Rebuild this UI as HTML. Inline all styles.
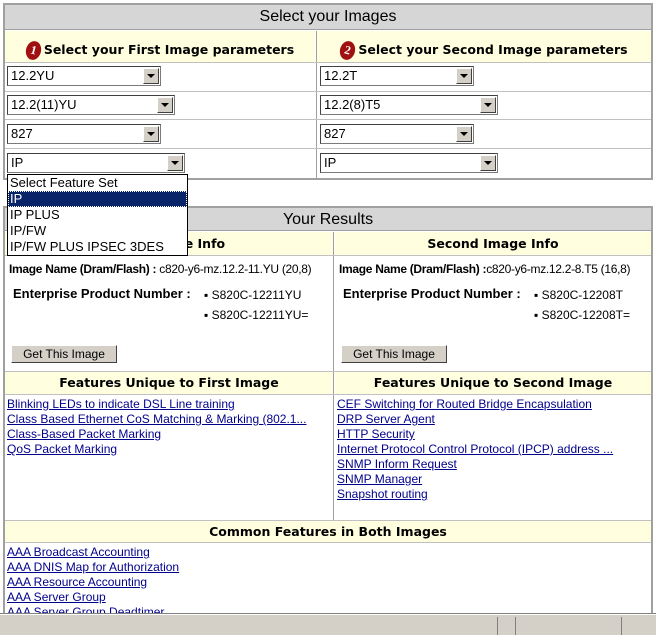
<!DOCTYPE html>
<html><head><meta charset="utf-8"><style>
*{margin:0;padding:0;box-sizing:border-box}
body{width:656px;height:635px;background:#fff;position:relative;overflow:hidden;font-family:"Liberation Sans",Arial,sans-serif;font-size:12px;color:#000}
.a{position:absolute}
.hd{background:#d6d6d6;text-align:center;font-size:16px;border-bottom:1px solid #a0a0a0}
.yl{background:#ffffe0;text-align:center;font-family:"DejaVu Sans",sans-serif;font-weight:bold;font-size:12.5px}
.box{border:2px solid #a0a0a0}
.vl{position:absolute;width:1px;background:#a0a0a0}
.hl{position:absolute;height:1px;background:#c0c0c0}
.sel{position:absolute;height:20px;border:1px solid #7a7a7a;border-top-color:#404040;border-left-color:#404040;background:#fff;font-size:13px;padding:1px 3px;line-height:16px}
.sel b{position:absolute;right:1px;top:1px;width:16px;height:16px;background:#d4d0c8;border:1px solid;border-color:#fff #404040 #404040 #fff}
.sel b:after{content:"";position:absolute;left:3px;top:5px;border:4px solid transparent;border-top:4px solid #000;border-bottom:0}
a{color:#00008b;text-decoration:underline;display:block;line-height:15px;font-size:12px}
.btn{position:absolute;height:18px;background:#d4d0c8;border:1px solid;border-color:#fff #404040 #404040 #fff;font-size:12px;line-height:16px;text-align:center}
.ic{display:inline-block;width:15px;height:19px;border-radius:50%;background:#a01010;color:#fff;font-size:12px;line-height:19px;text-align:center;vertical-align:0px;margin-right:3px;font-family:"Liberation Serif",serif;transform:rotate(15deg)}
</style></head><body>
<div class="a box" style="left:3px;top:3px;width:650px;height:177px"></div>
<div class="a hd" style="left:5px;top:5px;width:646px;height:25px;line-height:24px">Select your Images</div>
<div class="a yl" style="left:5px;top:31px;width:310px;height:31px;line-height:38px"><span class="ic">1</span>Select your First Image parameters</div>
<div class="a yl" style="left:317px;top:31px;width:334px;height:31px;line-height:38px"><span class="ic">2</span>Select your Second Image parameters</div>
<div class="vl" style="left:316px;top:31px;height:147px"></div>
<div class="hl" style="left:5px;top:62px;width:646px"></div>
<div class="hl" style="left:5px;top:91px;width:646px"></div>
<div class="hl" style="left:5px;top:119px;width:646px"></div>
<div class="hl" style="left:5px;top:148px;width:646px"></div>
<div class="sel" style="left:7px;top:66px;width:154px">12.2YU<b></b></div>
<div class="sel" style="left:7px;top:95px;width:168px">12.2(11)YU<b></b></div>
<div class="sel" style="left:7px;top:124px;width:154px">827<b></b></div>
<div class="sel" style="left:7px;top:153px;width:178px">IP<b></b></div>
<div class="sel" style="left:320px;top:66px;width:154px">12.2T<b></b></div>
<div class="sel" style="left:320px;top:95px;width:178px">12.2(8)T5<b></b></div>
<div class="sel" style="left:320px;top:124px;width:154px">827<b></b></div>
<div class="sel" style="left:320px;top:153px;width:178px">IP<b></b></div>

<div class="a box" style="left:3px;top:206px;width:650px;height:420px"></div>
<div class="a hd" style="left:5px;top:208px;width:646px;height:23px;line-height:24px">Your Results</div>
<div class="a yl" style="left:5px;top:232px;width:328px;height:23px;line-height:24px">First Image Info</div>
<div class="a yl" style="left:335px;top:232px;width:316px;height:23px;line-height:24px">Second Image Info</div>
<div class="vl" style="left:333px;top:232px;height:288px"></div>
<div class="hl" style="left:5px;top:255px;width:646px"></div>
<div class="a" style="left:9px;top:262px;font-size:12px;letter-spacing:-0.3px"><b>Image Name (Dram/Flash) :</b> c820-y6-mz.12.2-11.YU (20,8)</div>
<div class="a" style="left:339px;top:262px;font-size:12px;letter-spacing:-0.3px"><b>Image Name (Dram/Flash) :</b>c820-y6-mz.12.2-8.T5 (16,8)</div>
<div class="a" style="left:13px;top:286px;font-size:13px;font-weight:bold">Enterprise Product Number :</div>
<div class="a" style="left:343px;top:286px;font-size:13px;font-weight:bold">Enterprise Product Number :</div>
<div class="a" style="left:204px;top:285px;line-height:20px">▪ S820C-12211YU<br>▪ S820C-12211YU=</div>
<div class="a" style="left:534px;top:285px;line-height:20px">▪ S820C-12208T<br>▪ S820C-12208T=</div>
<div class="btn" style="left:11px;top:345px;width:106px">Get This Image</div>
<div class="btn" style="left:341px;top:345px;width:106px">Get This Image</div>
<div class="hl" style="left:5px;top:371px;width:646px"></div>
<div class="a yl" style="left:5px;top:372px;width:328px;height:22px;line-height:22px">Features Unique to First Image</div>
<div class="a yl" style="left:335px;top:372px;width:316px;height:22px;line-height:22px">Features Unique to Second Image</div>
<div class="hl" style="left:5px;top:394px;width:646px"></div>
<div class="a" style="left:7px;top:397px">
<a>Blinking LEDs to indicate DSL Line training</a><a>Class Based Ethernet CoS Matching &amp; Marking (802.1...</a><a>Class-Based Packet Marking </a><a>QoS Packet Marking</a></div>
<div class="a" style="left:337px;top:397px">
<a>CEF Switching for Routed Bridge Encapsulation</a><a>DRP Server Agent</a><a>HTTP Security</a><a>Internet Protocol Control Protocol (IPCP) address ...</a><a>SNMP Inform Request</a><a>SNMP Manager</a><a>Snapshot routing</a></div>
<div class="hl" style="left:5px;top:520px;width:646px"></div>
<div class="a yl" style="left:5px;top:521px;width:646px;height:21px;line-height:22px">Common Features in Both Images</div>
<div class="hl" style="left:5px;top:542px;width:646px"></div>
<div class="a" style="left:7px;top:545px">
<a>AAA Broadcast Accounting</a><a>AAA DNIS Map for Authorization</a><a>AAA Resource Accounting</a><a>AAA Server Group</a><a>AAA Server Group Deadtimer</a></div>

<div class="a" style="left:7px;top:174px;width:181px;height:82px;border:1px solid #000;background:#fff;font-size:13px;line-height:16px">
<div style="padding-left:2px">Select Feature Set</div>
<div style="background:#0a246a;color:#fff;padding-left:2px;outline:1px dotted #fff;outline-offset:-1px">IP</div>
<div style="padding-left:2px">IP PLUS</div>
<div style="padding-left:2px">IP/FW</div>
<div style="padding-left:2px">IP/FW PLUS IPSEC 3DES</div></div>

<div class="a" style="left:0;top:614px;width:656px;height:21px;background:#d4d0c8;border-top:1px solid #fff"></div>
<div class="a" style="left:0;top:613px;width:656px;height:1px;background:#808080"></div>
<div class="a" style="left:497px;top:617px;width:1px;height:18px;background:#808080"></div>
<div class="a" style="left:515px;top:617px;width:1px;height:18px;background:#808080"></div>
<div class="a" style="left:621px;top:617px;width:1px;height:18px;background:#808080"></div>
</body></html>
